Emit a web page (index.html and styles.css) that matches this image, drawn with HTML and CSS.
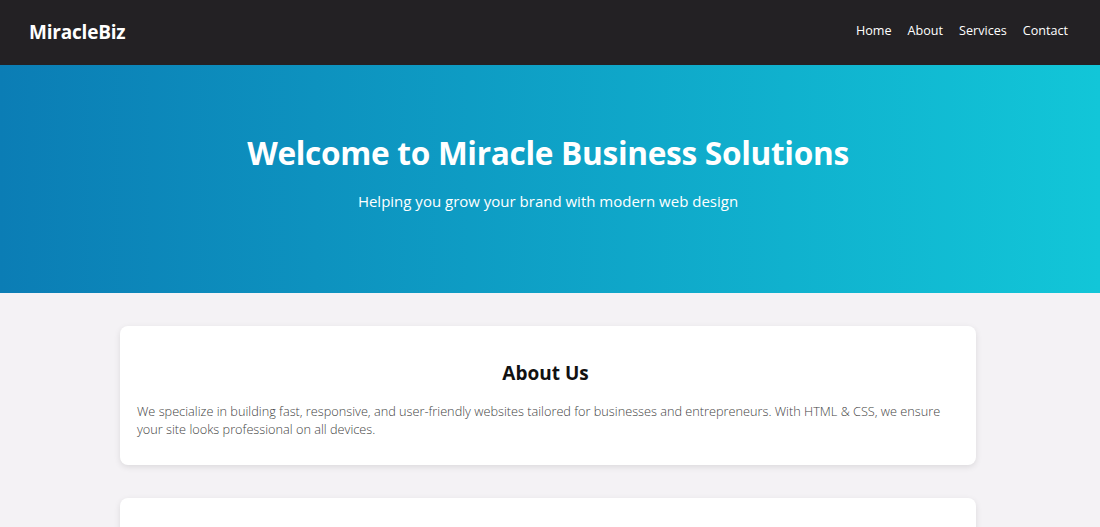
FILE: index.html
```html
<!DOCTYPE html>
<html lang="en">
<head>
<meta charset="utf-8">
<title>MiracleBiz</title>
<link rel="stylesheet" href="styles.css">
</head>
<body>
<header class="site-header">
  <div class="logo">MiracleBiz</div>
  <nav class="nav">
    <a href="#">Home</a>
    <a href="#">About</a>
    <a href="#">Services</a>
    <a href="#">Contact</a>
  </nav>
</header>
<section class="hero">
  <h1 class="hero-title">Welcome to Miracle Business Solutions</h1>
  <p class="hero-sub">Helping you grow your brand with modern web design</p>
</section>
<main class="main">
  <section class="card">
    <h2 class="card-title">About Us</h2>
    <p class="card-text">We specialize in building fast, responsive, and user-friendly websites tailored for businesses and entrepreneurs. With HTML &amp; CSS, we ensure your site looks professional on all devices.</p>
  </section>
  <section class="card">
    <h2 class="card-title">Our Services</h2>
    <p class="card-text">Website design, landing pages, and more.</p>
  </section>
</main>
</body>
</html>
```
FILE: styles.css
```css
* { box-sizing: border-box; }
html, body { margin: 0; padding: 0; }
body {
  font-family: "Open Sans", "Noto Sans", sans-serif;
  background: #f4f2f5;
  color: #222;
}
.site-header {
  height: 65px;
  background: #232124;
  display: flex;
  align-items: center;
  justify-content: space-between;
  padding: 0 32px 2px 29px;
}
.logo {
  color: #fff;
  font-weight: 700;
  font-size: 19px;
  letter-spacing: -0.2px;
}
.nav {
  display: flex;
  gap: 16px;
  padding-bottom: 2px;
}
.nav a {
  color: #fff;
  text-decoration: none;
  font-size: 12.6px;
}
.hero {
  height: 228px;
  background: linear-gradient(90deg, #0b7db5 0%, #12c6d8 100%);
  color: #fff;
  text-align: center;
  padding: 66px 24px 0 20px;
}
.hero-title {
  margin: 0;
  font-size: 31.6px;
  font-weight: 700;
  line-height: 44px;
  letter-spacing: -0.3px;
}
.hero-sub {
  margin: 15px 0 0;
  font-size: 15px;
  line-height: 22px;
}
.main {
  max-width: 860px;
  margin: 33px auto 0;
  padding-right: 4px;
}
.card {
  background: #fff;
  border-radius: 8px;
  box-shadow: 0 2px 6px rgba(0,0,0,0.1);
  padding: 34px 22px 15px 17px;
  margin-bottom: 33px;
}
.card-title {
  margin: 0 0 16px;
  text-align: center;
  font-size: 19px;
  font-weight: 700;
  color: #111;
  line-height: 26px;
}
.card-text {
  margin: 0 0 12px;
  font-size: 12.72px;
  line-height: 18px;
  font-weight: 300;
  color: #444;
}
```
